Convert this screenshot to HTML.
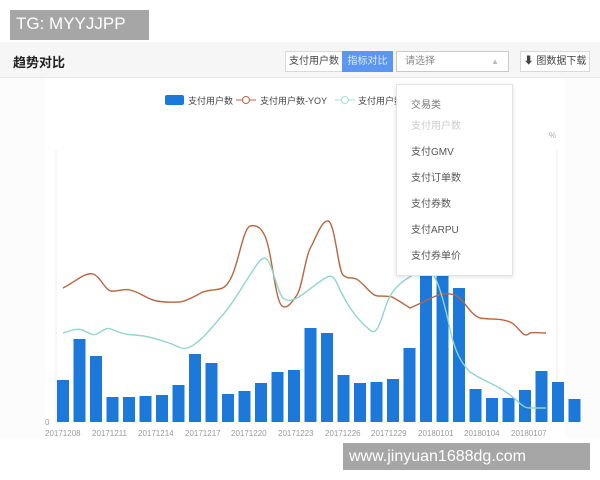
<!DOCTYPE html>
<html><head><meta charset="utf-8"><style>
*{margin:0;padding:0;box-sizing:border-box}
body{width:600px;height:480px;background:#fff;position:relative;overflow:hidden;font-family:"Liberation Sans","Noto Sans CJK SC",sans-serif}
.abs{position:absolute}
.wm{background:#a6a6a6;color:#fff;font-size:17px;line-height:28px;padding-left:6px}
.hdr{left:0;top:42px;width:600px;height:36px;background:#f6f6f6;border-bottom:1px solid #e8e8e8}
.btn{height:21px;top:51px;border:1px solid #d9d9d9;background:#fff;font-size:10px;color:#444;text-align:center;line-height:19px}
.dd{left:396px;top:84px;width:117px;height:192px;background:#fff;border:1px solid #e3e3e3;box-shadow:0 1px 4px rgba(0,0,0,.12);font-size:10px;color:#555}
.dd div{position:absolute;left:14px}
</style></head><body>
<div class="abs wm" style="left:10px;top:10px;width:139px;height:30px">TG: MYYJJPP</div>
<div class="abs" style="left:0;top:78px;width:600px;height:360px;background:#fcfcfc"></div>
<div class="abs hdr"></div>
<div class="abs" style="left:13px;top:52px;font-size:13px;font-weight:bold;color:#222">趋势对比</div>
<div class="abs btn" style="left:285px;width:58px">支付用户数</div>
<div class="abs btn" style="left:342px;width:51px;background:#5b97f0;border-color:#5b97f0;color:#dfeaff">指标对比</div>
<div class="abs btn" style="left:396px;width:113px;text-align:left;padding-left:8px;color:#888;border-color:#c9c9c9">请选择<span style="position:absolute;right:9px;color:#bbb;font-size:8px">▲</span></div>
<div class="abs btn" style="left:520px;width:70px">⬇ 图数据下载</div>
<svg class="abs" style="left:0;top:78px" width="600" height="360" viewBox="0 78 600 360">
<rect x="45" y="78" width="520" height="360" fill="#fff"/>
<line x1="56" y1="150" x2="56" y2="422" stroke="#eee"/>
<line x1="557" y1="150" x2="557" y2="422" stroke="#eee"/>
<rect x="165" y="95" width="19" height="10" rx="2" fill="#1c78d9"/>
<text x="188" y="104" font-size="9" fill="#444">支付用户数</text>
<line x1="236" y1="100" x2="256" y2="100" stroke="#c0633f"/><circle cx="246" cy="100" r="3.5" fill="#fff" stroke="#c0633f"/>
<text x="260" y="104" font-size="9" fill="#444">支付用户数-YOY</text>
<line x1="335" y1="100" x2="355" y2="100" stroke="#a8e0d8"/><circle cx="345" cy="100" r="3.5" fill="#fff" stroke="#a8e0d8"/>
<text x="358" y="104" font-size="9" fill="#444">支付用户数</text>
<text x="549" y="138" font-size="8" fill="#aaa">%</text>
<g fill="#1c78d9">
<rect x="57" y="380" width="12" height="42"/><rect x="73.5" y="339" width="12" height="83"/><rect x="90" y="356" width="12" height="66"/><rect x="106.5" y="397" width="12" height="25"/><rect x="123" y="397" width="12" height="25"/><rect x="139.5" y="396" width="12" height="26"/><rect x="156" y="395" width="12" height="27"/><rect x="172.5" y="385" width="12" height="37"/><rect x="189" y="354" width="12" height="68"/><rect x="205.5" y="363" width="12" height="59"/><rect x="222" y="394" width="12" height="28"/><rect x="238.5" y="391" width="12" height="31"/><rect x="255" y="383" width="12" height="39"/><rect x="271.5" y="372" width="12" height="50"/><rect x="288" y="370" width="12" height="52"/><rect x="304.5" y="328" width="12" height="94"/><rect x="321" y="333" width="12" height="89"/><rect x="337.5" y="375" width="12" height="47"/><rect x="354" y="383" width="12" height="39"/><rect x="370.5" y="382" width="12" height="40"/><rect x="387" y="379" width="12" height="43"/><rect x="403.5" y="348" width="12" height="74"/><rect x="420" y="272" width="12" height="150"/><rect x="436.5" y="262" width="12" height="160"/><rect x="453" y="288" width="12" height="134"/><rect x="469.5" y="389" width="12" height="33"/><rect x="486" y="398" width="12" height="24"/><rect x="502.5" y="398" width="12" height="24"/><rect x="519" y="390" width="12" height="32"/><rect x="535.5" y="371" width="12" height="51"/><rect x="552" y="382" width="12" height="40"/><rect x="568.5" y="399" width="12" height="23"/>
</g>
<path d="M63 288 C75 282 85 272 93 274 C100 276 105 290 111 291 C118 292 125 288 130 290 C140 292 148 300 157 301 C168 303 175 302 180 302 C190 300 198 294 203 292 C215 288 222 292 228 283 C238 270 242 230 250 226 C258 224 262 230 265 236 C272 252 275 300 282 306 C288 310 293 300 297 295 C303 285 305 255 312 245 C318 232 323 220 328 221 C335 222 338 270 343 275 C348 280 353 276 358 280 C368 288 372 296 378 296 C385 296 390 296 392 297 C398 300 402 303 410 308 C430 300 440 290 455 295 C465 300 470 315 480 318 C492 320 500 318 510 322 C520 326 522 340 530 333 C536 332 540 333 546 333" fill="none" stroke="#b8663f" stroke-width="1.4"/>
<path d="M63 333 C70 331 76 328 82 330 C88 332 92 336 97 334 C103 331 106 327 111 329 C118 332 125 335 135 335 C150 336 160 340 172 344 C180 348 184 350 190 347 C200 342 210 330 220 318 C232 305 240 290 250 275 C256 266 260 258 265 258 C272 260 276 290 283 298 C288 302 293 300 297 298 C307 292 318 282 327 277 C333 274 336 280 340 290 C350 310 358 320 370 330 C378 338 382 315 388 300 C393 290 398 285 405 280 C412 276 418 270 425 268 C433 268 440 285 448 320 C453 345 458 360 470 372 C485 382 498 385 510 395 C520 402 522 408 530 408 C536 408 540 408 546 408" fill="none" stroke="#8fd6cc" stroke-width="1.4"/>
<text x="45" y="425" font-size="8" fill="#999">0</text>
<g font-size="8" fill="#999">
<text x="45" y="436">20171208</text><text x="92" y="436">20171211</text><text x="138" y="436">20171214</text><text x="185" y="436">20171217</text><text x="231" y="436">20171220</text><text x="278" y="436">20171223</text><text x="325" y="436">20171226</text><text x="371" y="436">20171229</text><text x="418" y="436">20180101</text><text x="464" y="436">20180104</text><text x="511" y="436">20180107</text>
</g>
</svg>
<div class="abs dd">
<div style="top:11px;color:#777">交易类</div>
<div style="top:32px;color:#ccc">支付用户数</div>
<div style="top:58px">支付GMV</div>
<div style="top:84px">支付订单数</div>
<div style="top:110px">支付券数</div>
<div style="top:136px">支付ARPU</div>
<div style="top:162px">支付券单价</div>
</div>
<div class="abs wm" style="left:343px;top:443px;width:247px;height:27px;font-size:16px;line-height:27px">www.jinyuan1688dg.com</div>
</body></html>
